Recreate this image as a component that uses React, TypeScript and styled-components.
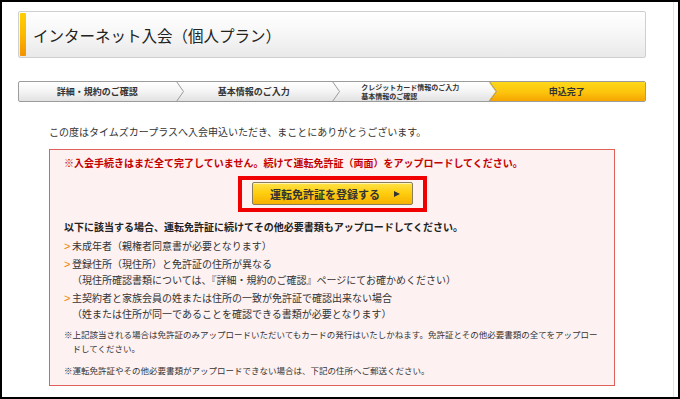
import React from "react";
import styled, { createGlobalStyle } from "styled-components";

const GlobalStyle = createGlobalStyle`
  html, body { margin: 0; padding: 0; background: #fff; }
  body { font-family: "Noto Sans CJK JP", "Noto Sans", sans-serif; color: #333; }
  * { box-sizing: border-box; }
`;

const Frame = styled.div`
  width: 680px;
  height: 399px;
  border: 2px solid #000;
  background: #fff;
  overflow: hidden;
`;

const Page = styled.div`
  width: 672px;
  height: 100%;
  border-right: 1px solid #e4e4e4;
  padding: 9px 0 0 16px;
`;

const TitleBox = styled.div`
  width: 628px;
  height: 47px;
  border: 1px solid #cfcfcf;
  border-radius: 2px;
  background: linear-gradient(to bottom, #ffffff 0%, #f6f6f6 50%, #e9e9e9 100%);
  display: flex;
  align-items: stretch;
  padding: 1px;
  gap: 7px;
`;

const Accent = styled.div`
  width: 6px;
  border-radius: 1px;
  background: linear-gradient(to bottom, #ffd000 0%, #fbb900 50%, #f39200 100%);
`;

const Title = styled.h1`
  margin: 0;
  align-self: center;
  font-size: 15.5px;
  font-weight: 400;
  color: #222;
  line-height: 20px;
  padding-top: 1px;
`;

const StepBar = styled.div`
  margin-top: 23px;
  width: 628px;
  height: 21px;
  display: flex;
  border: 1px solid #9c9c9c;
  border-radius: 2px;
  background: linear-gradient(to bottom, #ffffff 0%, #f4f4f4 50%, #e2e2e2 100%);
  overflow: hidden;
`;

const Step = styled.div<{ $active?: boolean }>`
  position: relative;
  flex: 1;
  display: flex;
  align-items: center;
  justify-content: center;
  text-align: center;
  font-weight: 700;
  color: #333;
  font-size: 9px;
  line-height: 12px;
  background: ${(p) =>
    p.$active
      ? "linear-gradient(to bottom, #ffd81a 0%, #fcc40c 55%, #f5a400 100%)"
      : "transparent"};
  clip-path: ${(p) =>
    p.$active ? "polygon(0 0, 100% 0, 100% 100%, 0 100%, 7px 50%)" : "none"};
`;

const StepSmall = styled.span`
  display: flex;
  flex-direction: column;
  font-size: 7px;
  line-height: 8.5px;
  text-align: left;
`;

const Chevron = styled.svg`
  position: absolute;
  left: 0;
  top: 0;
  width: 9px;
  height: 19px;
`;

const Content = styled.div`
  margin-left: 31px;
  margin-top: 23px;
`;

const Lead = styled.p`
  margin: 0;
  font-size: 10px;
  line-height: 14px;
  color: #333;
`;

const AlertBox = styled.div`
  margin-top: 10px;
  width: 566px;
  border: 1px solid #e0605a;
  background: #fdf1f1;
  padding: 6px 14px 8px 14px;
`;

const AlertText = styled.p`
  margin: 0;
  font-size: 10px;
  line-height: 14px;
  font-weight: 700;
  color: #c40000;
`;

const ButtonRow = styled.div`
  margin-top: 6px;
  display: flex;
  justify-content: center;
`;

const Highlight = styled.div`
  border: 4px solid #f00000;
  padding: 2px 10px 3px 10px;
`;

const RegisterButton = styled.button`
  width: 161px;
  height: 23px;
  border: 1px solid #8a7d5a;
  border-radius: 2px;
  background: linear-gradient(to bottom, #ffe24a 0%, #ffcf10 45%, #f7b000 100%);
  box-shadow: inset 0 1px 0 rgba(255, 255, 255, 0.6);
  display: flex;
  align-items: center;
  justify-content: center;
  gap: 14px;
  padding: 0 0 0 6px;
  font-family: "Noto Sans CJK JP", sans-serif;
  font-size: 11px;
  font-weight: 700;
  color: #333;
  cursor: pointer;
`;

const Arrow = styled.span`
  width: 0;
  height: 0;
  border-left: 6px solid #333;
  border-top: 3.5px solid transparent;
  border-bottom: 3.5px solid transparent;
`;

const SubHead = styled.p`
  margin: 7px 0 0 0;
  font-size: 10px;
  line-height: 16px;
  font-weight: 700;
  color: #222;
`;

const Item = styled.div<{ $first?: boolean }>`
  display: flex;
  margin-top: ${(p) => (p.$first ? "3px" : "2px")};
  font-size: 10px;
  line-height: 16px;
  color: #333;
`;

const Marker = styled.span`
  width: 8px;
  flex: none;
  color: #f08300;
  font-family: "Liberation Sans", sans-serif;
  font-size: 11px;
`;

const Note = styled.p<{ $gap: number }>`
  margin: ${(p) => p.$gap}px 0 0 0;
  font-size: 8.5px;
  line-height: 14px;
  color: #333;
  padding-left: 1em;
  text-indent: -1em;
`;

const steps = [
  { label: "詳細・規約のご確認" },
  { label: "基本情報のご入力" },
  { label: "", small: ["クレジットカード情報のご入力", "基本情報のご確認"] },
  { label: "申込完了", active: true },
];

export default function App() {
  return (
    <>
      <GlobalStyle />
      <Frame>
        <Page>
          <TitleBox>
            <Accent />
            <Title>インターネット入会（個人プラン）</Title>
          </TitleBox>

          <StepBar>
            {steps.map((s, i) => (
              <Step key={i} $active={s.active}>
                {i > 0 && (
                  <Chevron viewBox="0 0 9 19">
                    <path d="M0.5 -0.5 L7.5 9.5 L0.5 19.5" fill="none" stroke="#9a9a9a" strokeWidth="1" />
                  </Chevron>
                )}
                {s.small ? (
                  <StepSmall>
                    <span>{s.small[0]}</span>
                    <span>{s.small[1]}</span>
                  </StepSmall>
                ) : (
                  s.label
                )}
              </Step>
            ))}
          </StepBar>

          <Content>
            <Lead>この度はタイムズカープラスへ入会申込いただき、まことにありがとうございます。</Lead>

            <AlertBox>
              <AlertText>※入会手続きはまだ全て完了していません。続けて運転免許証（両面）をアップロードしてください。</AlertText>

              <ButtonRow>
                <Highlight>
                  <RegisterButton type="button">
                    運転免許証を登録する
                    <Arrow />
                  </RegisterButton>
                </Highlight>
              </ButtonRow>

              <SubHead>以下に該当する場合、運転免許証に続けてその他必要書類もアップロードしてください。</SubHead>

              <Item $first>
                <Marker>&gt;</Marker>
                <span>未成年者（親権者同意書が必要となります）</span>
              </Item>
              <Item>
                <Marker>&gt;</Marker>
                <span>
                  登録住所（現住所）と免許証の住所が異なる
                  <br />
                  （現住所確認書類については、『詳細・規約のご確認』ページにてお確かめください）
                </span>
              </Item>
              <Item>
                <Marker>&gt;</Marker>
                <span>
                  主契約者と家族会員の姓または住所の一致が免許証で確認出来ない場合
                  <br />
                  （姓または住所が同一であることを確認できる書類が必要となります）
                </span>
              </Item>

              <Note $gap={5}>
                ※上記該当される場合は免許証のみアップロードいただいてもカードの発行はいたしかねます。免許証とその他必要書類の全てをアップロー
                <br />
                ドしてください。
              </Note>
              <Note $gap={8}>※運転免許証やその他必要書類がアップロードできない場合は、下記の住所へご郵送ください。</Note>
            </AlertBox>
          </Content>
        </Page>
      </Frame>
    </>
  );
}
